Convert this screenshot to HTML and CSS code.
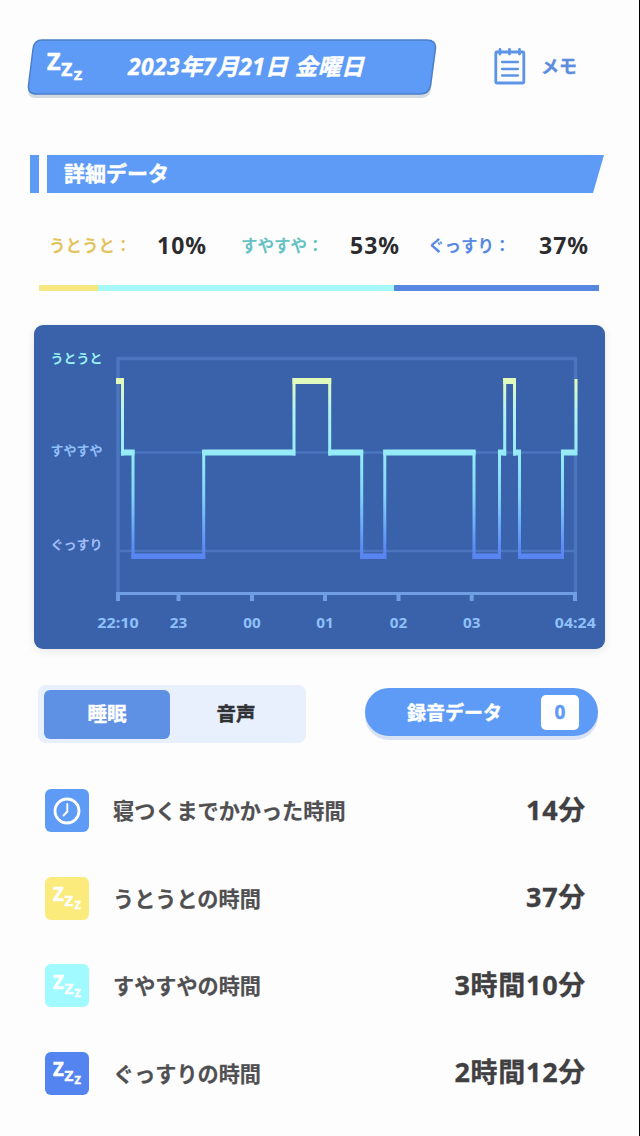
FILE: index.html
```
<!DOCTYPE html>
<html lang="ja">
<head>
<meta charset="utf-8">
<title>詳細データ</title>
<link rel="stylesheet" href="styles.css">
</head>
<body>
<main class="screen">
  <header class="header">
    <div class="date-banner">
      <svg class="banner-bg" width="411" height="62" viewBox="26 38 411 62">
        <path d="M40 43H428Q437 43 435.500 52L431 89Q430 98 421 98H36Q27 98 28 89L33 52Q34 43 40 43Z" fill="#d4dbe0"/>
        <path d="M42 40H426.500Q436.500 40 435.400 49L430.500 85.500Q429 94 420 94H37Q27.500 94 28.500 85.500L33 49Q34 40 42 40Z" fill="#5e9bf6" stroke="#4b7fc7" stroke-width="1.500"/>
      </svg>
      <svg class="zzz banner-zzz" width="38" height="34" viewBox="0 0 38 34"><text x="0" y="19.500" font-size="24" textLength="13.500" lengthAdjust="spacingAndGlyphs">Z</text><text x="14.300" y="26" font-size="18.500" textLength="11" lengthAdjust="spacingAndGlyphs">Z</text><text x="27" y="30" font-size="13" textLength="8" lengthAdjust="spacingAndGlyphs">Z</text></svg>
      <span class="date">2023年7月21日 金曜日</span>
    </div>
    <div class="memo">
      <svg width="32" height="37" viewBox="0 0 32 37" fill="none" stroke="#5c95e6" stroke-width="2.800" stroke-linecap="round">
        <rect x="1.800" y="4" width="28" height="31" rx="1"/>
        <path d="M6 1.500V6M15.500 1.500V6M25.500 1.500V6" stroke-width="2.800"/>
        <path d="M8 14H24M8 21H24M8 27.500H24" stroke-width="2.300"/>
      </svg>
      <span>メモ</span>
    </div>
  </header>

  <h1 class="section-title"><i></i><span>詳細データ</span></h1>

  <div class="legend">
    <span class="name light">うとうと：</span><b>10%</b>
    <span class="name mid">すやすや：</span><b>53%</b>
    <span class="name deep">ぐっすり：</span><b>37%</b>
  </div>
  <div class="ratio"><i class="r-light"></i><i class="r-mid"></i><i class="r-deep"></i></div>

  <section class="chart">
    <svg width="571" height="324" viewBox="34 325 571 324">
      <defs>
        <linearGradient id="depth" gradientUnits="userSpaceOnUse" x1="0" y1="378" x2="0" y2="559">
          <stop offset="0" stop-color="#e4fbb4"/>
          <stop offset=".04" stop-color="#dcf8c4"/>
          <stop offset=".18" stop-color="#b4f3ef"/>
          <stop offset=".42" stop-color="#94ebf7"/>
          <stop offset=".65" stop-color="#82d4fa"/>
          <stop offset=".93" stop-color="#5c8cf5"/>
          <stop offset="1" stop-color="#5883f2"/>
        </linearGradient>
      </defs>
      <g fill="none" stroke="#4b76bf">
        <path d="M118 592V358.500H575.500V592" stroke-width="3.500"/>
        <path d="M118 452.500H575M118 551H575" stroke-width="2.500"/>
      </g>
      <path d="M116 593.500H577" stroke="#6f9fe2" stroke-width="3"/>
      <path d="M118 592V601M178.500 592V601M252 592V601M325 592V601M398.500 592V601M471.700 592V601M575 592V601" stroke="#6f9fe2" stroke-width="4"/>
      <g fill="none" stroke="url(#depth)">
        <path stroke-width="3" d="M122.500 378V455.400M133 450V559M203.700 559V450M294 455.400V378M329.700 378V455.400M361.700 450V559M384.800 559V450M474 450V559M499.500 559V450M504.700 455.400V378M514.500 378V455.400M519.500 450V559M562.500 559V450M576 455V379"/>
      </g>
      <g fill="url(#depth)">
        <path d="M116 378h8v6h-8zM292.500 378h38.700v6h-38.700zM503.200 378h12.800v6h-12.800z"/>
        <path d="M121 449.500h13.500v6h-13.500zM202.200 449.500h93v6h-93zM328.500 449.500h34.700v6h-34.700zM383.300 449.500h92.200v6h-92.200zM498 449.500h8.200v6h-8.200zM513 449.500h8v6h-8zM561 449.500h16v6h-16z"/>
        <path d="M131.500 553.500h73.700v5.500h-73.700zM360.200 553.500h26.100v5.500h-26.100zM472.500 553.500h28.500v5.500h-28.500zM518 553.500h46v5.500h-46z"/>
      </g>
      <g class="stage">
        <text x="50.500" y="363" textLength="52" fill="#9af1f6">うとうと</text>
        <text x="50.500" y="455" textLength="52" fill="#91bff7">すやすや</text>
        <text x="50.500" y="549" textLength="52" fill="#a2bdf8">ぐっすり</text>
      </g>
      <g class="hour">
        <text x="97.300" y="628" textLength="41.500" lengthAdjust="spacingAndGlyphs">22:10</text>
        <text x="169.700" y="628" textLength="17.500" lengthAdjust="spacingAndGlyphs">23</text>
        <text x="243.200" y="628" textLength="17.500" lengthAdjust="spacingAndGlyphs">00</text>
        <text x="316.200" y="628" textLength="17.500" lengthAdjust="spacingAndGlyphs">01</text>
        <text x="389.700" y="628" textLength="17.500" lengthAdjust="spacingAndGlyphs">02</text>
        <text x="463" y="628" textLength="17.500" lengthAdjust="spacingAndGlyphs">03</text>
        <text x="554.800" y="628" textLength="41" lengthAdjust="spacingAndGlyphs">04:24</text>
      </g>
    </svg>
  </section>

  <div class="controls">
    <div class="tabs"><span class="tab active">睡眠</span><span class="tab">音声</span></div>
    <div class="recordings"><span>録音データ</span><b>0</b></div>
  </div>

  <ul class="stats">
    <li><span class="tile clock"><svg width="28" height="28" viewBox="0 0 28 28" fill="none" stroke="#fff" stroke-linecap="round"><circle cx="14" cy="14" r="12" stroke-width="2.800"/><path d="M14.300 7V14.500L10.500 18.500" stroke-width="1.900"/></svg></span><span class="label">寝つくまでかかった時間</span><b>14分</b></li>
    <li><span class="tile yellow"><svg class="zzz" width="30.400" height="27.200" viewBox="0 0 38 34"><text x="0" y="19.500" font-size="24" textLength="13.500" lengthAdjust="spacingAndGlyphs">Z</text><text x="14.300" y="26" font-size="18.500" textLength="11" lengthAdjust="spacingAndGlyphs">Z</text><text x="27" y="30" font-size="13" textLength="8" lengthAdjust="spacingAndGlyphs">Z</text></svg></span><span class="label">うとうとの時間</span><b>37分</b></li>
    <li><span class="tile cyan"><svg class="zzz" width="30.400" height="27.200" viewBox="0 0 38 34"><text x="0" y="19.500" font-size="24" textLength="13.500" lengthAdjust="spacingAndGlyphs">Z</text><text x="14.300" y="26" font-size="18.500" textLength="11" lengthAdjust="spacingAndGlyphs">Z</text><text x="27" y="30" font-size="13" textLength="8" lengthAdjust="spacingAndGlyphs">Z</text></svg></span><span class="label">すやすやの時間</span><b>3時間10分</b></li>
    <li><span class="tile blue"><svg class="zzz" width="30.400" height="27.200" viewBox="0 0 38 34"><text x="0" y="19.500" font-size="24" textLength="13.500" lengthAdjust="spacingAndGlyphs">Z</text><text x="14.300" y="26" font-size="18.500" textLength="11" lengthAdjust="spacingAndGlyphs">Z</text><text x="27" y="30" font-size="13" textLength="8" lengthAdjust="spacingAndGlyphs">Z</text></svg></span><span class="label">ぐっすりの時間</span><b>2時間12分</b></li>
  </ul>
</main>
</body>
</html>
```
FILE: styles.css
```
* { box-sizing: border-box; }
body { margin: 0; background: #fdfdfd; font-family: "Noto Sans", "Noto Sans CJK JP", sans-serif; font-weight: 700; }
b { font-weight: 700; }
.zzz { overflow: visible; fill: #fff; stroke: #fff; stroke-width: .6px; }
.screen { width: 640px; height: 1136px; padding-top: 38px; border-right: 1px solid #000; overflow: hidden; white-space: nowrap; }

.header { display: flex; height: 62px; padding-left: 26px; }
.date-banner { position: relative; display: flex; width: 411px; height: 57px; align-items: center; padding-left: 21px; color: #fff; }
.banner-bg { position: absolute; left: 0; top: 0; }
.banner-zzz { position: relative; margin-top: 1px; }
.date { position: relative; margin: -2px 0 0 43px; font-size: 22.800px; font-style: italic; letter-spacing: .4px; -webkit-text-stroke: .4px; }
.memo { display: flex; align-items: center; height: 57px; margin-left: 57px; gap: 15px; font-size: 18px; color: #5c8cdc; }
.memo span { margin-top: -3px; -webkit-text-stroke: .3px; }

.section-title { display: flex; gap: 8px; height: 38px; margin: 55px 0 0 30px; font-size: 21px; line-height: 37px; color: #fff; -webkit-text-stroke: .4px; }
.section-title i { width: 9px; background: #5e9bf6; }
.section-title span { width: 557px; padding-left: 17px; background: #5e9bf6; clip-path: polygon(0 0, 100% 0, 546px 100%, 0 100%); }

.legend { display: grid; grid-template-columns: 108px 84px 109px 78px 111px 60px; align-items: center; height: 34px; margin: 35px 0 0 49px; font-size: 16.500px; }
.legend b { font-size: 23px; letter-spacing: 1px; color: #2c2c2e; }
.light { color: #e4c35d; }
.mid { color: #65c2c4; }
.deep { color: #5689e4; }
.ratio { display: flex; width: 560px; height: 6px; margin: 23px 0 0 39px; }
.r-light { width: 59px; background: #f6e780; }
.r-mid { width: 296px; background: #a6f7fa; }
.r-deep { flex: 1; background: #5887e0; }

.chart { width: 571px; height: 324px; margin: 34px 0 0 34px; border-radius: 9px; background: #3962aa; box-shadow: 0 2px 10px #00000018; }
.chart svg { display: block; }
.stage { font-size: 13px; }
.hour { font-size: 14px; fill: #8fc0fa; }

.controls { display: flex; margin: 36px 0 0 38px; }
.tabs { display: flex; width: 268px; height: 58px; padding: 5px 6px 4px; border-radius: 8px; background: #e8f0fd; -webkit-text-stroke: .4px; }
.tab { width: 126px; line-height: 47px; text-align: center; font-size: 19.500px; color: #303236; }
.tab + .tab { margin-left: 3px; }
.tab.active { border-radius: 6px; background: #5e90e3; color: #fff; }
.recordings { display: flex; align-items: center; width: 233px; height: 48px; margin: 3px 0 0 59px; padding: 0 19px 0 42px; border-radius: 24px; background: #5e9bf6; box-shadow: 0 4px 0 #d9e3f3; color: #fff; font-size: 19px; justify-content: space-between; -webkit-text-stroke: .4px; }
.recordings b { width: 38px; height: 35px; border-radius: 5px; background: #fff; color: #5e9bf6; line-height: 34px; text-align: center; }

.stats { display: grid; grid-auto-rows: 43px; row-gap: 44.500px; margin: 46px 54px 0 45px; padding: 0; list-style: none; }
.stats li { display: flex; align-items: center; }
.tile { display: flex; align-items: center; justify-content: center; width: 44px; height: 43px; border-radius: 6px; }
.tile .zzz { margin: 2px 0 0 3px; }
.clock { background: #5e9bf6; }
.yellow { background: #faeb7c; }
.cyan { background: #a0faff; }
.blue { background: #5384ef; }
.label { margin: -2px 0 0 24px; font-size: 21.150px; color: #505052; -webkit-text-stroke: .2px; }
.stats b { margin: -5px -1px 0 auto; font-size: 27px; letter-spacing: .7px; color: #404042; -webkit-text-stroke: .3px; }
```
